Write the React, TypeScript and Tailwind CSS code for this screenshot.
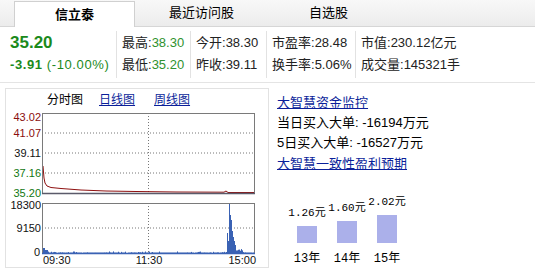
const base = "font-['Liberation_Sans','Noto_Sans_CJK_SC',sans-serif]";

const tabs = ["信立泰", "最近访问股", "自选股"];

const stats = [
  { w: "w-[74px]", rows: [["最高", "38.30", true], ["最低", "35.20", true]] },
  { w: "w-[76px]", rows: [["今开", "38.30", false], ["昨收", "39.11", false]] },
  { w: "w-[89px]", rows: [["市盈率", "28.48", false], ["换手率", "5.06%", false]] },
  { w: "flex-1", rows: [["市值", "230.12亿元", false], ["成交量", "145321手", false]] },
] as const;

const forecast = [
  { year: "13年", eps: "1.26元", h: "h-[17px]" },
  { year: "14年", eps: "1.60元", h: "h-[22px]" },
  { year: "15年", eps: "2.02元", h: "h-[28px]" },
];

// volume heights per pixel column, svg units (max 50)
function volumes() {
  const out: number[] = [];
  let seed = 7;
  const rnd = () => {
    seed = (seed * 9301 + 49297) % 233280;
    return seed / 233280;
  };
  for (let i = 0; i < 212; i++) {
    let v = rnd() < 0.35 ? rnd() * 1.6 : 0.4;
    if (i < 2) v = 5;
    else if (i < 5) v = 3;
    if (i === 184) v = 20;
    if (i === 185) v = 12;
    if (i === 186) v = 50;
    if (i === 187) v = 38;
    if (i === 188) v = 33;
    if (i === 189) v = 22;
    if (i === 190) v = 16;
    if (i === 191) v = 12;
    if (i === 192) v = 8;
    if (i > 192 && i < 200) v = 2 + rnd() * 2;
    if (i === 211) v = 5;
    out.push(v);
  }
  return out;
}

function Chart() {
  const vols = volumes();
  const price = "37,55 38,67 39,72 41,75 45,76.5 55,77.5 75,79 100,80 130,80.5 170,81 218,81.2 220,80 222,81.5 248,81.5";
  return (
    <svg width={261} height={156} className="block text-[11px]" fontFamily="Liberation Sans, sans-serif">
      {/* price panel */}
      <line x1={36} y1={22} x2={248} y2={22} stroke="#777" strokeDasharray="1 2" />
      <line x1={36} y1={42} x2={248} y2={42} stroke="#777" strokeDasharray="1 2" />
      <line x1={36} y1={62} x2={248} y2={62} stroke="#777" strokeDasharray="1 2" />
      <line x1={142.5} y1={2} x2={142.5} y2={82} stroke="#777" strokeDasharray="1 2" />
      <polyline points={price} fill="none" stroke="#8e1010" strokeWidth={1} />
      <rect x={36.5} y={2.5} width={212} height={80} fill="none" stroke="#7a7a7a" />
      <line x1={36} y1={82.5} x2={249} y2={82.5} stroke="#5a5a6a" strokeWidth={1.5} />
      <text x={35} y={10} textAnchor="end" fill="#8b0d0d">43.02</text>
      <text x={35} y={26} textAnchor="end" fill="#8b0d0d">41.07</text>
      <text x={35} y={46} textAnchor="end" fill="#111">39.11</text>
      <text x={35} y={66} textAnchor="end" fill="#117711">37.16</text>
      <text x={35} y={86} textAnchor="end" fill="#117711">35.20</text>

      {/* volume panel */}
      <line x1={36} y1={117} x2={248} y2={117} stroke="#777" strokeDasharray="1 2" />
      <line x1={142.5} y1={92} x2={142.5} y2={142} stroke="#777" strokeDasharray="1 2" />
      {vols.map((v, i) => (
        <rect key={i} x={37 + i} y={142 - v} width={1} height={v} fill="#3a62b4" />
      ))}
      <rect x={36.5} y={92.5} width={212} height={50} fill="none" stroke="#7a7a7a" />
      <line x1={36} y1={142.5} x2={249} y2={142.5} stroke="#3a62b4" strokeWidth={1.5} />
      <text x={35} y={98} textAnchor="end" fill="#111">18300</text>
      <text x={35} y={121} textAnchor="end" fill="#111">9150</text>
      <text x={34} y={145} textAnchor="end" fill="#111">0</text>
      <text x={37} y={153} fill="#111">09:30</text>
      <text x={143} y={153} textAnchor="middle" fill="#111">11:30</text>
      <text x={250} y={153} textAnchor="end" fill="#111">15:00</text>
    </svg>
  );
}

export default function App() {
  return (
    <div className={`w-[535px] h-[275px] overflow-hidden bg-white text-[13px] text-[#222] ${base}`}>
      <div className="flex h-[27px] items-end gap-[6px] border-b border-[#d6d6d6] bg-linear-to-b from-[#f8f8f8] to-[#ececec] pl-[14px]">
        {tabs.map((t, i) =>
          i === 0 ? (
            <div key={t} className="-mb-px flex h-[26px] w-[121px] items-center justify-center border border-b-0 border-[#d0d0d0] bg-white font-bold text-black">
              {t}
            </div>
          ) : (
            <div key={t} className="flex h-[26px] w-[121px] items-center justify-center text-black">
              {t}
            </div>
          )
        )}
      </div>

      <div className="flex h-[56px] border-b border-[#e4e4e4]">
        <div className="w-[116px] pl-[10px] pt-[5px]">
          <div className="text-[17px] font-bold leading-[22px] text-[#1b8a1b]">35.20</div>
          <div className="whitespace-nowrap leading-[22px] tracking-[0.6px] text-[#1b8a1b]">
            <span className="font-bold">-3.91</span> (-10.00%)
          </div>
        </div>
        {stats.map((col, i) => (
          <div key={i} className={`${col.w} my-[4px] border-l border-[#e2e2e2] pl-[5px] pt-[1px]`}>
            {col.rows.map(([label, value, green]) => (
              <div key={label} className="whitespace-nowrap leading-[22px]">
                {label}:<span className={green ? "text-[#2f922f]" : ""}>{value}</span>
              </div>
            ))}
          </div>
        ))}
      </div>

      <div className="mt-[5px] flex">
        <div className="ml-[5px] flex h-[180px] w-[264px] flex-col border border-[#e2e2e2]">
          <div className="flex h-[22px] items-center pl-[41px] text-[12px]">
            <span className="text-black">分时图</span>
            <a className="ml-[16px] text-[#0b1f9a] underline">日线图</a>
            <a className="ml-[19px] text-[#0b1f9a] underline">周线图</a>
          </div>
          <Chart />
        </div>

        <div className="flex-1 pl-[8px] pt-[5px]">
          <a className="block leading-[20px] text-[#0b1f9a] underline">大智慧资金监控</a>
          <div className="leading-[20px] text-black">当日买入大单: -16194万元</div>
          <div className="leading-[20px] text-black">5日买入大单: -16527万元</div>
          <a className="mt-[1px] block leading-[20px] text-[#0b1f9a] underline">大智慧一致性盈利预期</a>

          <div className="ml-[10px] mt-[22px] flex items-end">
            {forecast.map((f) => (
              <div key={f.year} className="flex w-[40px] flex-col items-center font-['Liberation_Mono','Noto_Sans_CJK_SC',monospace] text-[11px] text-black">
                <div className="mb-[7px] whitespace-nowrap leading-[12px]">{f.eps}</div>
                <div className={`w-[20px] bg-[#abb0ea] ${f.h}`} />
                <div className="mt-[9px] whitespace-nowrap leading-[14px] text-[12px]">{f.year}</div>
              </div>
            ))}
          </div>
        </div>
      </div>
    </div>
  );
}
